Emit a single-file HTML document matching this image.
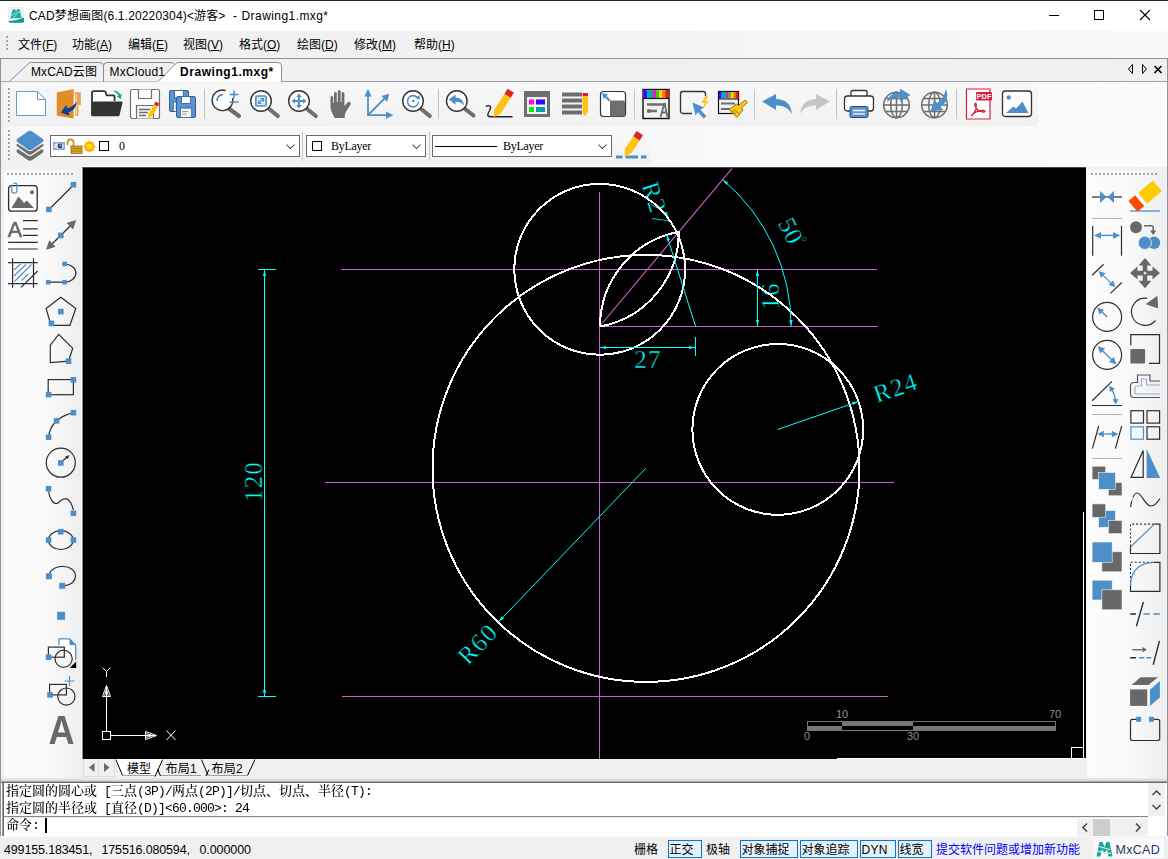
<!DOCTYPE html>
<html lang="zh-CN"><head><meta charset="utf-8"><title>CAD梦想画图 - Drawing1.mxg</title>
<style>
*{box-sizing:border-box}
html,body{margin:0;padding:0}
body{width:1168px;height:859px;position:relative;overflow:hidden;background:#f0f0f0;
 font-family:"Liberation Sans","Noto Sans CJK SC",sans-serif;font-size:12px;color:#000;line-height:14px}
.a{position:absolute}
.t{position:absolute;white-space:nowrap;line-height:14px}
u{text-decoration:underline;text-underline-offset:1px}
svg{position:absolute;overflow:visible}
.cmd{font-family:"Liberation Mono","Noto Serif CJK SC","Noto Sans CJK SC",monospace;font-size:13px;line-height:17px;white-space:pre;font-weight:500;will-change:transform}
.cmd i{font-style:normal;letter-spacing:-0.8px}
.sb{position:absolute;top:840px;height:18px;border:1px solid #0078d7;background:#e5f1fb}
</style></head>
<body>
<div class="a" style="left:0px;top:0px;width:1168px;height:1px;background:#26261e"></div>
<div class="a" style="left:0px;top:1px;width:1168px;height:30px;background:#fff"></div>
<div class="t" style="left:29px;top:9px;letter-spacing:0.15px">CAD梦想画图(6.1.20220304)&lt;游客&gt;</div>
<div class="t" style="left:233px;top:9px;">-</div>
<div class="t" style="left:241.5px;top:9px;letter-spacing:0.43px">Drawing1.mxg*</div>
<svg style="left:1040px;top:1px" width="128" height="30" viewBox="0 0 128 30"><path d="M9 14.5h10" stroke="#000" stroke-width="1" fill="none"/><rect x="54.5" y="9.5" width="9" height="9" stroke="#000" fill="none"/><path d="M100 9l10 10M110 9l-10 10" stroke="#000" stroke-width="1.1" fill="none"/></svg>
<div class="a" style="left:0px;top:31px;width:1168px;height:27px;background:linear-gradient(to right,#f0f0f0 0,#f1f1f1 40%,#f9f9f9 100%)"></div>
<div class="a" style="left:6px;top:36px;width:2px;height:15px;background:repeating-linear-gradient(to bottom,#a6a6a6 0,#a6a6a6 2px,transparent 2px,transparent 4px)"></div>
<div class="t" style="left:18px;top:38px;">文件(<u>F</u>)</div>
<div class="t" style="left:72px;top:38px;">功能(<u>A</u>)</div>
<div class="t" style="left:128px;top:38px;">编辑(<u>E</u>)</div>
<div class="t" style="left:183px;top:38px;">视图(<u>V</u>)</div>
<div class="t" style="left:239px;top:38px;">格式(<u>O</u>)</div>
<div class="t" style="left:297px;top:38px;">绘图(<u>D</u>)</div>
<div class="t" style="left:354px;top:38px;">修改(<u>M</u>)</div>
<div class="t" style="left:414px;top:38px;">帮助(<u>H</u>)</div>
<div class="a" style="left:0px;top:58px;width:1168px;height:1px;background:#8d929c"></div>
<div class="a" style="left:0px;top:58px;width:1px;height:801px;background:#8d929c"></div>
<div class="a" style="left:1167px;top:58px;width:1px;height:780px;background:#8d929c"></div>
<div class="a" style="left:1px;top:59px;width:1166px;height:22px;background:#f0f0f0"></div>
<div class="a" style="left:1px;top:81px;width:1166px;height:1px;background:#9ca2ad"></div>
<div class="a" style="left:1px;top:82px;width:1166px;height:85px;background:linear-gradient(to right,#f0f0f0 0,#f3f3f3 30%,#fafafa 65%,#fbfbfb 100%)"></div>
<div class="a" style="left:4px;top:83px;width:1034px;height:43px;background:linear-gradient(to bottom,#f8f8f8,#f1f1f1);border-radius:0 5px 5px 0"></div>
<div class="a" style="left:4px;top:127px;width:647px;height:37px;background:linear-gradient(to bottom,#f9f9f9,#f1f1f1);border-radius:4px"></div>
<div class="a" style="left:8px;top:88px;width:2px;height:34px;background:repeating-linear-gradient(to bottom,#a6a6a6 0,#a6a6a6 2px,transparent 2px,transparent 4px)"></div>
<div class="a" style="left:8px;top:130px;width:2px;height:32px;background:repeating-linear-gradient(to bottom,#a6a6a6 0,#a6a6a6 2px,transparent 2px,transparent 4px)"></div>
<svg style="left:0;top:59px" width="300" height="24" viewBox="0 0 300 24">
<path d="M9.5 22.5 L28.5 4.5 Q29.5 3.5 31.5 3.5 L100 3.5 Q103.5 3.5 103.5 7 L103.5 22.5" fill="#f0f0f0" stroke="#8c8c8c"/>
<path d="M103.5 22.5 L103.5 7 Q103.5 3.5 107 3.5 L170 3.5 Q173 3.5 174.5 5 L174.5 22.5" fill="#f0f0f0" stroke="#8c8c8c"/>
<path d="M158 22.5 L176 4.5 Q177 3.5 179 3.5 L278 3.5 Q281.5 3.5 281.5 7 L281.5 23 L158 23Z" fill="#fff" stroke="none"/>
<path d="M158 22.5 L176 4.5 Q177 3.5 179 3.5 L278 3.5 Q281.5 3.5 281.5 7 L281.5 22.5" fill="none" stroke="#8c8c8c"/>
</svg>
<div class="t" style="left:31px;top:65px;letter-spacing:0.1px">MxCAD云图</div>
<div class="t" style="left:109.5px;top:65px;letter-spacing:0.2px">MxCloud1</div>
<div class="t" style="left:180px;top:65px;font-weight:bold;letter-spacing:0.55px">Drawing1.mxg*</div>
<svg style="left:1120px;top:59px" width="46" height="22" viewBox="0 0 46 22"><path d="M12.5 5.5v9l-4-4.5z M22.5 5.5v9l4-4.5z" fill="none" stroke="#000" stroke-width="1"/><path d="M34.5 7l7 7M41.5 7l-7 7" stroke="#000" stroke-width="1.7" fill="none"/></svg>
<div class="a" style="left:302px;top:131px;width:1px;height:30px;background:#c9c9c9"></div>
<div class="a" style="left:429px;top:131px;width:1px;height:30px;background:#c9c9c9"></div>
<div class="a" style="left:50px;top:135px;width:250px;height:22px;background:#fff;border:1px solid #6b6b6b"></div><svg style="left:285px;top:143px" width="12" height="8" viewBox="0 0 12 8"><path d="M1.5 1.5l4 4l4-4" fill="none" stroke="#3c3c3c" stroke-width="1.05"/></svg>
<div class="a" style="left:306px;top:135px;width:120px;height:22px;background:#fff;border:1px solid #6b6b6b"></div><svg style="left:411px;top:143px" width="12" height="8" viewBox="0 0 12 8"><path d="M1.5 1.5l4 4l4-4" fill="none" stroke="#3c3c3c" stroke-width="1.05"/></svg>
<div class="a" style="left:432px;top:135px;width:180px;height:22px;background:#fff;border:1px solid #6b6b6b"></div><svg style="left:597px;top:143px" width="12" height="8" viewBox="0 0 12 8"><path d="M1.5 1.5l4 4l4-4" fill="none" stroke="#3c3c3c" stroke-width="1.05"/></svg>
<div class="t" style="left:119px;top:139px;font-family:'Liberation Serif','Noto Serif CJK SC',serif;font-size:12px;letter-spacing:-0.3px">0</div>
<div class="a" style="left:99px;top:141px;width:10px;height:10px;border:1px solid #000;background:#fff"></div>
<div class="a" style="left:312px;top:141px;width:10px;height:10px;border:1px solid #000;background:#fff"></div>
<div class="t" style="left:331px;top:139px;font-family:'Liberation Serif','Noto Serif CJK SC',serif;font-size:12px;letter-spacing:-0.3px">ByLayer</div>
<div class="a" style="left:435px;top:146px;width:62px;height:1px;background:#000"></div>
<div class="t" style="left:503px;top:139px;font-family:'Liberation Serif','Noto Serif CJK SC',serif;font-size:12px;letter-spacing:-0.3px">ByLayer</div>
<div class="a" style="left:1px;top:167px;width:82px;height:611px;background:#f0f0f0"></div>
<div class="a" style="left:4px;top:170px;width:78px;height:608px;background:linear-gradient(to right,#fcfcfc 0,#f9f9f9 60%,#ededed 100%);border-radius:4px 0 0 4px"></div>
<div class="a" style="left:7px;top:173px;width:68px;height:2px;background:repeating-linear-gradient(to right,#a6a6a6 0,#a6a6a6 2px,transparent 2px,transparent 4px)"></div>
<div class="a" style="left:1086px;top:167px;width:81px;height:611px;background:#f0f0f0"></div>
<div class="a" style="left:1087px;top:170px;width:78px;height:608px;background:linear-gradient(to right,#fcfcfc 0,#f9f9f9 60%,#ededed 100%);border-radius:4px"></div>
<div class="a" style="left:1091px;top:173px;width:68px;height:2px;background:repeating-linear-gradient(to right,#a6a6a6 0,#a6a6a6 2px,transparent 2px,transparent 4px)"></div>
<div class="a" style="left:81px;top:166px;width:1005px;height:1px;background:#fff"></div>
<div class="a" style="left:81px;top:166px;width:1px;height:593px;background:#fff"></div>
<div class="a" style="left:82px;top:167px;width:1004px;height:592px;background:#000;overflow:hidden;border-top:1px solid #4a4a4a;border-left:1px solid #8a8a8a">
<svg style="left:-1px;top:-1px" width="1004" height="592" viewBox="82 167 1004 592">
<text transform="translate(262 481.5) rotate(-90)" text-anchor="middle" fill="#00ffff" stroke="#000" stroke-width="0.45" font-family="Liberation Serif, serif" font-size="25" letter-spacing="1.2">120</text>
<text transform="translate(648 368) rotate(0)" text-anchor="middle" fill="#00ffff" stroke="#000" stroke-width="0.45" font-family="Liberation Serif, serif" font-size="25" letter-spacing="1.2">27</text>
<text transform="translate(779 296) rotate(-90)" text-anchor="middle" fill="#00ffff" stroke="#000" stroke-width="0.45" font-family="Liberation Serif, serif" font-size="25" letter-spacing="1.2">16</text>
<text transform="translate(641.5 185) rotate(72.5)" text-anchor="start" fill="#00ffff" stroke="#000" stroke-width="0.45" font-family="Liberation Serif, serif" font-size="25" letter-spacing="1.2">R27</text>
<text transform="translate(777.5 223) rotate(63.4)" text-anchor="start" fill="#00ffff" stroke="#000" stroke-width="0.45" font-family="Liberation Serif, serif" font-size="25" letter-spacing="0.3">50<tspan font-size="15" dx="-2.5" dy="-9">°</tspan></text>
<text transform="translate(877 403) rotate(-19)" text-anchor="start" fill="#00ffff" stroke="#000" stroke-width="0.45" font-family="Liberation Serif, serif" font-size="25" letter-spacing="1.2">R24</text>
<text transform="translate(468 666) rotate(-46)" text-anchor="start" fill="#00ffff" stroke="#000" stroke-width="0.45" font-family="Liberation Serif, serif" font-size="25" letter-spacing="1.2">R60</text>
<g stroke="#c864c8" stroke-width="1" fill="none" shape-rendering="crispEdges">
<path d="M341 269.5H877 M599.5 326.5H878 M325 482.5H894 M342 696.5H888 M599.5 192V760"/>
</g>
<path d="M599.5 326.5L731.9 168.7" stroke="#c864c8" stroke-width="1.1" fill="none"/>
<g stroke="#fff" stroke-width="2" fill="none" shape-rendering="crispEdges">
<circle cx="599.7" cy="269.3" r="85.4"/>
<circle cx="646" cy="468.4" r="213.5"/>
<circle cx="777.8" cy="429.4" r="85.4"/>
<path d="M600.1 326.5 A96.1 96.1 0 0 1 678.9 231.9 A96.1 96.1 0 0 1 600.1 326.5"/>
</g>
<g stroke="#00ffff" stroke-width="1" fill="none">
<path d="M264.5 269.5V696.5 M258 269.5H276 M258 696.5H276" shape-rendering="crispEdges"/>
<path d="M599.5 347.5H695.5 M695.5 337V356" shape-rendering="crispEdges"/>
<path d="M757.5 269.5V326.5" shape-rendering="crispEdges"/>
<path d="M791.1 326.5 A191.6 191.6 0 0 0 722.7 179.7"/>
<path d="M695.6 326.5 L666.7 234.9"/>
<path d="M777.5 429.5 L858.3 401.6"/>
<path d="M645.8 468.3 L498.8 621.6"/>
</g>
<path d="M264.5 270.0 L266.1 276.0 L262.9 276.0Z" fill="#00ffff"/>
<path d="M264.5 696.0 L262.9 690.0 L266.1 690.0Z" fill="#00ffff"/>
<path d="M600.0 347.5 L606.0 345.9 L606.0 349.1Z" fill="#00ffff"/>
<path d="M695.0 347.5 L689.0 349.1 L689.0 345.9Z" fill="#00ffff"/>
<path d="M757.5 270.0 L759.1 276.0 L755.9 276.0Z" fill="#00ffff"/>
<path d="M757.5 326.0 L755.9 320.0 L759.1 320.0Z" fill="#00ffff"/>
<path d="M791.1 326.0 L789.4 320.0 L792.6 320.0Z" fill="#00ffff"/>
<path d="M722.7 179.7 L728.3 182.4 L726.2 184.8Z" fill="#00ffff"/>
<path d="M666.7 234.9 L670.0 240.1 L666.9 241.1Z" fill="#00ffff"/>
<path d="M858.3 401.6 L853.2 405.1 L852.1 402.0Z" fill="#00ffff"/>
<path d="M498.8 621.6 L501.8 616.2 L504.1 618.4Z" fill="#00ffff"/>
<g stroke="#fff" stroke-width="1" fill="none" shape-rendering="crispEdges">
<rect x="102.5" y="731.5" width="8" height="8"/>
<path d="M106.5 731.5V686 M110.5 735.5H156"/>
</g>
<g stroke="#fff" stroke-width="1" fill="none">
<path d="M106.5 685.5L102.5 696.5H110.5Z M106.5 689L104.7 696 M106.5 689L108.3 696"/>
<path d="M156.5 735.5L145.5 731.5V739.5Z M153 735.5L146 733.7 M153 735.5L146 737.3"/>
<path d="M102.5 667.5L106.5 671.5L110.5 667.5 M106.5 671.5V677"/>
<path d="M166.5 730.5L175.5 740 M175.5 730.5L166.5 740"/>
</g>
<g shape-rendering="crispEdges"><rect x="807.5" y="721.5" width="248" height="9" fill="none" stroke="#767676"/>
<rect x="842" y="722" width="71" height="4" fill="#767676"/><rect x="808" y="726" width="34" height="4" fill="#767676"/><rect x="913" y="726" width="142" height="4" fill="#767676"/></g>
<text x="842" y="718" fill="#909090" font-family="Liberation Sans, sans-serif" font-size="11" text-anchor="middle">10</text><text x="1055" y="718" fill="#909090" font-family="Liberation Sans, sans-serif" font-size="11" text-anchor="middle">70</text><text x="807" y="740" fill="#909090" font-family="Liberation Sans, sans-serif" font-size="11" text-anchor="middle">0</text><text x="913" y="740" fill="#909090" font-family="Liberation Sans, sans-serif" font-size="11" text-anchor="middle">30</text>
<g stroke="#fff" stroke-width="1" fill="none" shape-rendering="crispEdges"><path d="M837 758.5H1086 M1083.5 512V759"/><rect x="1071.5" y="747.5" width="12" height="11"/></g>
</svg></div>
<div class="a" style="left:83px;top:759px;width:1003px;height:19px;background:#f0f0f0"></div>
<div class="a" style="left:83px;top:759px;width:16px;height:18px;background:#f0f0f0;border:1px solid #dcdcdc;border-top:none"></div>
<div class="a" style="left:99px;top:759px;width:16px;height:18px;background:#f0f0f0;border:1px solid #dcdcdc;border-top:none;border-left:none"></div>
<svg style="left:83px;top:759px" width="180" height="19" viewBox="0 0 180 19"><path d="M11.5 4v9l-5.5-4.5z M21 4v9l5.5-4.5z" fill="#6a6a6a"/><path d="M32.5 0 L39.5 16.5 L72 16.5 L79.5 0 Z" fill="#fff" stroke="none"/><path d="M32.8 0.5 L39.6 16.5 M72 17.5 L79.7 0.5 M74.5 10 L77.5 17 M118.4 0.5 L125.2 16.5 M123 17 L126 10.5 M172 0.5 L164.5 16.5" fill="none" stroke="#000" stroke-width="1"/><path d="M39.5 16.5H72 M78 16.5H118 M126 16.5H164" stroke="#a0a0a0" fill="none"/></svg>
<div class="t" style="left:127px;top:762px;">模型</div>
<div class="t" style="left:165.5px;top:762px;letter-spacing:0.3px">布局1</div>
<div class="t" style="left:211.5px;top:762px;letter-spacing:0.3px">布局2</div>
<div class="a" style="left:1px;top:778px;width:1166px;height:3px;background:linear-gradient(to bottom,#ececec,#d8d8d8)"></div>
<div class="a" style="left:1px;top:781px;width:1166px;height:1px;background:#a8a8a8"></div>
<div class="a" style="left:1px;top:782px;width:1166px;height:1px;background:#6a6a6a"></div>
<div class="a" style="left:1px;top:783px;width:1166px;height:53px;background:#fff"></div>
<div class="a" style="left:2px;top:783px;width:1px;height:53px;background:#a0a0a0"></div>
<div class="a" style="left:3px;top:783px;width:1px;height:53px;background:#696969"></div>
<div class="a" style="left:4px;top:816px;width:1144px;height:1px;background:#8a8a8a"></div>
<div class="a" style="left:4px;top:817px;width:1144px;height:1px;background:#e8e8e8"></div>
<div class="a" style="left:1148px;top:783px;width:17px;height:33px;background:#f0f0f0"></div>
<svg style="left:1148px;top:783px" width="17" height="33" viewBox="0 0 17 33"><path d="M4.5 12l4-4l4 4 M4.5 22l4 4l4-4" fill="none" stroke="#444" stroke-width="1.5"/></svg>
<div class="t cmd" style="left:6px;top:783px">指定圆的圆心或<i> [</i>三点<i>(3P)/</i>两点<i>(2P)]/</i>切点、切点、半径<i>(T):</i></div>
<div class="t cmd" style="left:6px;top:800px">指定圆的半径或<i> [</i>直径<i>(D)]&lt;60.000&gt;: 24</i></div>
<div class="t cmd" style="left:6px;top:817px">命令<i>:</i></div>
<div class="a" style="left:45px;top:818px;width:2px;height:15px;background:#000"></div>
<div class="a" style="left:1077px;top:819px;width:71px;height:17px;background:#f0f0f0"></div>
<div class="a" style="left:1093px;top:819px;width:17px;height:17px;background:#cdcdcd"></div>
<svg style="left:1077px;top:819px" width="71" height="17" viewBox="0 0 71 17"><path d="M10 4.5l-4 4l4 4 M59 4.5l4 4l-4 4" fill="none" stroke="#444" stroke-width="1.5"/></svg>
<div class="a" style="left:0px;top:836px;width:1168px;height:23px;background:#f0f0f0"></div>
<div class="a" style="left:0px;top:836px;width:1168px;height:1px;background:#fafafa"></div>
<div class="t" style="left:4px;top:843px;font-size:12.5px;letter-spacing:-0.15px">499155.183451,</div>
<div class="t" style="left:101.5px;top:843px;font-size:12.5px;letter-spacing:-0.15px">175516.080594,</div>
<div class="t" style="left:199.5px;top:843px;font-size:12.5px;letter-spacing:-0.1px">0.000000</div>
<div class="t" style="left:634px;top:843px;">栅格</div>
<div class="t" style="left:706px;top:843px;">极轴</div>
<div class="sb" style="left:668px;width:34px"></div><div class="t" style="left:669.5px;top:843px;letter-spacing:0px">正交</div>
<div class="sb" style="left:740px;width:58px"></div><div class="t" style="left:741.5px;top:843px;letter-spacing:0px">对象捕捉</div>
<div class="sb" style="left:800px;width:58px"></div><div class="t" style="left:801.5px;top:843px;letter-spacing:0px">对象追踪</div>
<div class="sb" style="left:860px;width:36px"></div><div class="t" style="left:861.5px;top:843px;letter-spacing:0.3px">DYN</div>
<div class="sb" style="left:898px;width:34px"></div><div class="t" style="left:899.5px;top:843px;letter-spacing:0px">线宽</div>
<div class="t" style="left:936px;top:843px;color:#0000ff">提交软件问题或增加新功能</div>
<div class="a" style="left:1093px;top:838px;width:71px;height:20px;background:#fafafa"></div>
<svg style="left:1096px;top:841px" width="17" height="16" viewBox="0 0 17 16"><path d="M0.5 15.5L3.5 1H6.5L8.5 6L10.5 1H13.5L16.5 15.5H12.5L11 8L8.5 13L6 8L4.5 15.5Z" fill="#1aa79a"/><path d="M3 5.5L14 8.5 M2 10.5L15 12.5" stroke="#fafafa" stroke-width="1"/></svg>
<div class="t" style="left:1115.5px;top:843px;color:#1f3864;font-size:12.5px;letter-spacing:0.3px">MxCAD</div>
<svg style="left:15px;top:88px" width="32" height="32" viewBox="0 0 32 32"><path d="M1.5 3.5H22.5L30.5 11.5V27.5H1.5Z" fill="#fff" stroke="#6b9bd0"/><path d="M22.5 3.5V11.5H30.5" fill="none" stroke="#6b9bd0"/></svg>
<svg style="left:53px;top:88px" width="32" height="32" viewBox="0 0 32 32"><path d="M3.8 4.5L20.6 1.1V30.5L3.8 27.8Z" fill="#e38c27"/><path d="M20.6 4.2H27.8V17H25.4V28H20.6Z" fill="#e9a14a"/><path d="M21.6 5V28" stroke="#fff" stroke-width="1.2"/><path d="M23.6 6V27" stroke="#f6d9b3" stroke-width="1"/><path d="M23.8 13.5C23.5 19.5 19.5 23.5 15.5 24.2L16.6 27.8L7.8 24.6L13.2 17L14.3 20.3C18 19.5 21.5 17 23.8 13.5Z" fill="#0a3f9e"/></svg>
<svg style="left:91px;top:88px" width="32" height="32" viewBox="0 0 32 32"><path d="M1 26V5Q1 3.2 2.8 3.2H13Q14.3 3.2 14.8 4.5L15.6 7.4H22Q23.6 7.4 23.6 9V13" fill="#fff" stroke="#333333" stroke-width="1.8"/><path d="M3.2 13.4H30.5Q31.8 13.4 31.5 14.8L28.6 27Q28.3 28.2 27 28.2H1.5Q0 28.2 0.1 26.5L1.6 14.8Q1.8 13.4 3.2 13.4Z" fill="#333333"/><path d="M23 3.2Q27 4 28 8L26.4 8.4L29.6 10.4L30.2 6.6L28.9 7.4Q27.6 3 23 3.2Z" fill="#1aa79a" stroke="#1aa79a" stroke-width="1"/></svg>
<svg style="left:129px;top:88px" width="32" height="32" viewBox="0 0 32 32"><rect x="1.5" y="1.5" width="29" height="29" rx="2" fill="#fff" stroke="#6e6e6e" stroke-width="1.2"/><path d="M9.5 1.5V10.5H22.5V1.5" fill="#fff" stroke="#6e6e6e" stroke-width="1.2"/><path d="M7.5 30.5V17.5H24.5V30.5" fill="#f4f4f4" stroke="#6e6e6e" stroke-width="1.2"/><path d="M10 21.5H21M10 24.5H19M10 27.5H17" stroke="#6e6e6e" stroke-width="1.4"/><path d="M19.5 30.5 L23.4 28.1 L28.7 18.6 L24.9 16.5 L19.5 26.0Z" fill="#ffc20e"/><path d="M28.7 18.6 L30.4 15.6 L26.6 13.4 L24.9 16.5Z" fill="#d8232a"/></svg>
<svg style="left:167px;top:88px" width="32" height="32" viewBox="0 0 32 32"><rect x="2.5" y="2.5" width="19" height="21" rx="1.5" fill="#5b93cf" stroke="#2f5f96" stroke-width="1"/><rect x="7.6" y="2.5" width="8.7" height="6.9" fill="#fff" stroke="#2f5f96" stroke-width="0.8"/><rect x="6.3" y="14.1" width="11.4" height="9.5" fill="#f4f4f4" stroke="#2f5f96" stroke-width="0.8"/><path d="M8.2 17.6h5.7M8.2 20.1h4.2" stroke="#888" stroke-width="0.9"/><rect x="9.5" y="8.5" width="19" height="21" rx="1.5" fill="#5b93cf" stroke="#2f5f96" stroke-width="1"/><rect x="14.6" y="8.5" width="8.7" height="6.9" fill="#fff" stroke="#2f5f96" stroke-width="0.8"/><rect x="13.3" y="20.1" width="11.4" height="9.5" fill="#f4f4f4" stroke="#2f5f96" stroke-width="0.8"/><path d="M15.2 23.6h5.7M15.2 26.1h4.2" stroke="#888" stroke-width="0.9"/></svg>
<div class="a" style="left:204px;top:89px;width:1px;height:30px;background:#c3c3c3"></div>
<svg style="left:211px;top:88px" width="32" height="32" viewBox="0 0 32 32"><path d="M18.5 21L28 28" stroke="#6e6e6e" stroke-width="4.1" stroke-linecap="round"/><path d="M21.5 10A10.3 10.3 0 1 1 14.5 2.5" fill="#fff" stroke="#333333" stroke-width="1.4"/><path d="M6 13A6 6 0 0 1 12 6.6" fill="none" stroke="#4f8fc9" stroke-width="1.8"/><path d="M18.5 6.5H27.5M23 2.5V10.5M18.5 14H27.5" stroke="#4f8fc9" stroke-width="1.6" fill="none"/></svg>
<svg style="left:249px;top:88px" width="32" height="32" viewBox="0 0 32 32"><path d="M19.5 20.5L28.8 28" stroke="#6e6e6e" stroke-width="4.1" stroke-linecap="round"/><circle cx="12" cy="13" r="10.3" fill="#fff" stroke="#333333" stroke-width="1.4"/><rect x="6.8" y="8" width="10.4" height="10" rx="1.5" fill="#d9e6f4" stroke="#4f8fc9" stroke-width="1.6"/><path d="M9.5 15.5L14.5 10.5M11.5 10.5H14.5V13.5M9.5 12.5V15.5H12.5" stroke="#4f8fc9" stroke-width="1.2" fill="none"/></svg>
<svg style="left:287px;top:88px" width="32" height="32" viewBox="0 0 32 32"><path d="M19.5 20.5L28.8 28" stroke="#6e6e6e" stroke-width="4.1" stroke-linecap="round"/><circle cx="12" cy="13" r="10.3" fill="#fff" stroke="#333333" stroke-width="1.4"/><path d="M12 5.5L14.8 9H13V12H16V10.2L19.5 13L16 15.8V14H13V17H14.8L12 20.5L9.2 17H11V14H8V15.8L4.5 13L8 10.2V12H11V9H9.2Z" fill="#4f8fc9"/></svg>
<svg style="left:325px;top:88px" width="32" height="32" viewBox="0 0 32 32"><path d="M9.5 30C8 26 5.5 22 5.5 19V9.5Q5.5 8 6.8 8T8.2 9.5V15H9V5.5Q9 4 10.4 4T11.8 5.5V14H12.8V3.5Q12.8 2 14.2 2T15.6 3.5V14H16.6V5.5Q16.6 4 18 4T19.4 5.5V18L22.5 14.5Q23.8 13.2 25 14T25.6 16.5C23.5 20 21 23 20 26L19.6 30Z" fill="#6e6e6e"/></svg>
<svg style="left:363px;top:88px" width="32" height="32" viewBox="0 0 32 32"><path d="M5 7V27.2H26" stroke="#4f8fc9" stroke-width="1.8" fill="none"/><path d="M5 27.2L22 10" stroke="#4f8fc9" stroke-width="1.8"/><path d="M5 0.8L8.6 8.5H1.4Z M30.5 27.2L23 30.8V23.6Z M26.3 5.8L24.2 13.8L18.4 8Z" fill="#4f8fc9"/></svg>
<svg style="left:401px;top:88px" width="32" height="32" viewBox="0 0 32 32"><path d="M19.5 20.5L28.8 28" stroke="#6e6e6e" stroke-width="4.1" stroke-linecap="round"/><circle cx="12" cy="13" r="10.3" fill="#fff" stroke="#333333" stroke-width="1.4"/><path d="M16.2 9.5A5.6 5.6 0 1 0 17.6 14" fill="none" stroke="#4f8fc9" stroke-width="1.6"/><path d="M18.8 7L18.6 11.8L14.4 10Z" fill="#4f8fc9"/><circle cx="12.2" cy="13" r="1.3" fill="#4f8fc9"/></svg>
<div class="a" style="left:438px;top:89px;width:1px;height:30px;background:#c3c3c3"></div>
<svg style="left:444px;top:88px" width="32" height="32" viewBox="0 0 32 32"><path d="M20.5 20.5L29.5 27.5" stroke="#6e6e6e" stroke-width="4.1" stroke-linecap="round"/><circle cx="12.8" cy="13" r="10.3" fill="#fff" stroke="#333333" stroke-width="1.4"/><path d="M4.8 11.5L11.5 6.5V9.6C16 9.6 19.5 12.5 20.2 17.5C18 14.8 15 13.8 11.5 13.8V16.8Z" fill="#4f8fc9"/></svg>
<svg style="left:482px;top:88px" width="32" height="32" viewBox="0 0 32 32"><path d="M3.8 18.5C8 16.5 10 18.5 7.5 22.5C4.5 27.5 5.5 29 10 28.8H30.5" fill="none" stroke="#222" stroke-width="1.4"/><path d="M11.8 29.3 L18.5 25.7 L28.7 9.8 L22.5 5.8 L12.3 21.7Z" fill="#ffc20e"/><path d="M28.7 9.8 L31.9 4.8 L25.7 0.8 L22.5 5.8Z" fill="#d8232a"/></svg>
<svg style="left:520px;top:88px" width="32" height="32" viewBox="0 0 32 32"><rect x="4" y="3" width="26" height="26" fill="#6e6e6e"/><rect x="7" y="9" width="20" height="17" fill="#f0f0f0"/><rect x="9" y="11.5" width="5" height="5" fill="#ff00ff"/><rect x="16" y="11.5" width="9" height="5" fill="#4000ff"/><rect x="9" y="19" width="5" height="5" fill="#00f000"/><rect x="16" y="19" width="9" height="5" fill="#00a0a0"/></svg>
<svg style="left:558px;top:88px" width="32" height="32" viewBox="0 0 32 32"><path d="M4 6.5H24M4 12.5H24M4 18.5H24M4 24.5H24" stroke="#6e6e6e" stroke-width="4"/><path d="M24.5 8H30V24L27.2 28.5L24.5 24Z" fill="#ffc20e"/><rect x="24.5" y="5" width="5.5" height="3" fill="#d8232a"/></svg>
<svg style="left:596px;top:88px" width="32" height="32" viewBox="0 0 32 32"><rect x="4.5" y="3.5" width="25" height="25" rx="3" fill="#fff" stroke="#333333" stroke-width="1.2"/><path d="M14 12.5H27Q29 12.5 29 14.5V26Q29 28.5 26.5 28.5H14Z" fill="#6e6e6e"/><path d="M6 5L12 6.5L10.5 8L14.5 12L13 13.5L9 9.5L7.5 11Z" fill="#4f8fc9"/></svg>
<div class="a" style="left:634px;top:89px;width:1px;height:30px;background:#c3c3c3"></div>
<svg style="left:640px;top:88px" width="32" height="32" viewBox="0 0 32 32"><rect x="3" y="1.5" width="26" height="29" fill="#f2f2f2" stroke="#111" stroke-width="1.4"/><rect x="3.70" y="2.2" width="3.38" height="8" fill="#4000ff"/><rect x="6.78" y="2.2" width="3.38" height="8" fill="#00a0ff"/><rect x="9.85" y="2.2" width="3.38" height="8" fill="#00c060"/><rect x="12.93" y="2.2" width="3.38" height="8" fill="#ff00ff"/><rect x="16.00" y="2.2" width="3.38" height="8" fill="#40d000"/><rect x="19.07" y="2.2" width="3.38" height="8" fill="#ffd000"/><rect x="22.15" y="2.2" width="3.38" height="8" fill="#ff8000"/><rect x="25.23" y="2.2" width="3.38" height="8" fill="#e02020"/><path d="M3 10.5H29" stroke="#111" stroke-width="1.2"/><path d="M7 16.5H26M7 23H17" stroke="#6e6e6e" stroke-width="2.4"/><path d="M20.5 29L24.5 15L27.5 29M22 24.5H26.5" stroke="#6e6e6e" stroke-width="1.8" fill="none"/><circle cx="9" cy="23" r="2" fill="#6e6e6e"/></svg>
<svg style="left:678px;top:88px" width="32" height="32" viewBox="0 0 32 32"><path d="M14 25.5H5Q2.5 25.5 2.5 23V6Q2.5 3.5 5 3.5H25Q27.5 3.5 27.5 6V8" fill="none" stroke="#333333" stroke-width="1.3"/><path d="M14.5 14.5L26 19.5L22.5 22L28.5 28L25.5 30.5L20 24L17.5 27.5Z" fill="#4f8fc9"/><path d="M27.5 8L23.5 15H26.5L24.5 21L31 13H27.5L30 8Z" fill="#ffc61a"/></svg>
<svg style="left:716px;top:88px" width="32" height="32" viewBox="0 0 32 32"><rect x="2.5" y="3.5" width="20" height="22" fill="#f2f2f2" stroke="#111" stroke-width="1.2"/><rect x="3.00" y="4" width="2.67" height="6.5" fill="#4000ff"/><rect x="5.38" y="4" width="2.67" height="6.5" fill="#00a0ff"/><rect x="7.75" y="4" width="2.67" height="6.5" fill="#00c060"/><rect x="10.12" y="4" width="2.67" height="6.5" fill="#ff00ff"/><rect x="12.50" y="4" width="2.67" height="6.5" fill="#40d000"/><rect x="14.88" y="4" width="2.67" height="6.5" fill="#ffd000"/><rect x="17.25" y="4" width="2.67" height="6.5" fill="#ff8000"/><rect x="19.62" y="4" width="2.67" height="6.5" fill="#e02020"/><path d="M2.5 11H22.5" stroke="#111"/><path d="M5 15.5H19M5 21H14" stroke="#6e6e6e" stroke-width="1.8"/><path d="M29 12L31.5 14.5L25.5 20L27 22L21 29.5L13 21.5L20.5 16L22.5 17.5Z" fill="#ffc61a" stroke="#7a5c00" stroke-width="0.8"/><path d="M16 23L20 26M18 21.5L22.5 25.5" stroke="#7a5c00" stroke-width="0.8"/></svg>
<div class="a" style="left:754px;top:89px;width:1px;height:30px;background:#c3c3c3"></div>
<svg style="left:761px;top:88px" width="32" height="32" viewBox="0 0 32 32"><path d="M1 13.5L15 6V11C24 11 30 16 31 26C28 20 22.5 17.5 15 17.5V22Z" fill="#4f8fc9"/></svg>
<svg style="left:799px;top:88px" width="32" height="32" viewBox="0 0 32 32"><path d="M31 13.5L17 6V11C8 11 2 16 1 26C4 20 9.5 17.5 17 17.5V22Z" fill="#c6c6c6"/></svg>
<div class="a" style="left:836px;top:89px;width:1px;height:30px;background:#c3c3c3"></div>
<svg style="left:843px;top:88px" width="32" height="32" viewBox="0 0 32 32"><path d="M8 8V4Q8 2.5 9.5 2.5H22.5Q24 2.5 24 4V8" fill="#fff" stroke="#333333" stroke-width="1.3"/><rect x="1.5" y="8" width="29" height="15" rx="3" fill="#fff" stroke="#333333" stroke-width="1.3"/><rect x="7" y="18.5" width="18" height="11" rx="1.5" fill="#5b93cf" stroke="#2a4a70" stroke-width="1"/><path d="M10 22.5H22M10 25.8H22" stroke="#fff" stroke-width="1.3"/></svg>
<svg style="left:881px;top:88px" width="32" height="32" viewBox="0 0 32 32"><g fill="none" stroke="#6e6e6e" stroke-width="1.5"><circle cx="15.5" cy="17" r="12.8"/><ellipse cx="15.5" cy="17" rx="5.8" ry="12.8"/><path d="M15.5 4.199999999999999V29.8M2.6999999999999993 17H28.3M4.4 10.6H26.6M4.4 23.4H26.6"/></g><path d="M19 0.5L29.5 7L19 13.5V9.5C13 9.5 9 11 6 14.5C7 8.5 12 4.5 19 4.5Z" fill="#4f8fc9"/></svg>
<svg style="left:919px;top:88px" width="32" height="32" viewBox="0 0 32 32"><g fill="none" stroke="#6e6e6e" stroke-width="1.5"><circle cx="15.5" cy="17" r="12.8"/><ellipse cx="15.5" cy="17" rx="5.8" ry="12.8"/><path d="M15.5 4.199999999999999V29.8M2.6999999999999993 17H28.3M4.4 10.6H26.6M4.4 23.4H26.6"/></g><path d="M27 1C30 9 27 15.5 21.5 18.5L24 22L11.5 23L15.5 11.5L18 15C22.5 12.5 25.5 8 27 1Z" fill="#4f8fc9"/></svg>
<div class="a" style="left:956px;top:89px;width:1px;height:30px;background:#c3c3c3"></div>
<svg style="left:963px;top:88px" width="32" height="32" viewBox="0 0 32 32"><path d="M3.5 1H21L27 1V31H3.5Z" fill="#fff" stroke="#d81e3f" stroke-width="1.2"/><rect x="13" y="4" width="16" height="8.5" rx="1" fill="#d81e3f"/><text x="21" y="11" text-anchor="middle" font-family="Liberation Sans, sans-serif" font-weight="bold" font-size="7.5" fill="#fff">PDF</text><path d="M9.5 26.5C12 24 13.5 19.5 13.2 16.5C12.9 14.5 11.5 15 11.8 17C12.3 20.5 16 24 20.5 24C22.5 24 22.5 22.3 20.5 22.3C17 22.3 12 24 9.5 26.5C8 28 9 28.5 9.5 26.5Z" fill="none" stroke="#d81e3f" stroke-width="1.3"/></svg>
<svg style="left:1001px;top:88px" width="32" height="32" viewBox="0 0 32 32"><rect x="1.5" y="3" width="29" height="25.5" rx="3" fill="#fff" stroke="#333333" stroke-width="1.3"/><circle cx="7.8" cy="9.5" r="2.2" fill="#4f8fc9"/><path d="M5 25L12.5 18.5L15 20.5L21.5 13.5L27.5 25Z" fill="#4f8fc9"/></svg>
<svg style="left:14px;top:130px" width="32" height="32" viewBox="0 0 32 32"><path d="M16 11.399999999999999Q17.2 11.399999999999999 18.2 12.299999999999999L29.0 19.8Q30.2 21.2 29.0 22.4L18.2 30.1Q16 31.6 13.8 30.1L3.000000000000001 22.4Q1.8000000000000007 21.2 3.000000000000001 19.8L13.8 12.299999999999999Q14.8 11.399999999999999 16 11.399999999999999Z" fill="#6e6e6e"/><path d="M16 6.699999999999999Q17.2 6.699999999999999 18.2 7.6L30.0 15.1Q31.2 16.5 30.0 17.7L18.2 25.400000000000002Q16 26.900000000000002 13.8 25.400000000000002L2.000000000000001 17.7Q0.8000000000000007 16.5 2.000000000000001 15.1L13.8 7.6Q14.8 6.699999999999999 16 6.699999999999999Z" fill="#f6f6f6"/><path d="M16 5.299999999999999Q17.2 5.299999999999999 18.2 6.199999999999999L29.0 13.7Q30.2 15.1 29.0 16.3L18.2 24.0Q16 25.5 13.8 24.0L3.000000000000001 16.3Q1.8000000000000007 15.1 3.000000000000001 13.7L13.8 6.199999999999999Q14.8 5.299999999999999 16 5.299999999999999Z" fill="#6e6e6e"/><path d="M16 1.8999999999999986Q17.2 1.8999999999999986 18.2 2.7999999999999985L30.0 10.299999999999999Q31.2 11.7 30.0 12.899999999999999L18.2 20.6Q16 22.1 13.8 20.6L2.000000000000001 12.899999999999999Q0.8000000000000007 11.7 2.000000000000001 10.299999999999999L13.8 2.7999999999999985Q14.8 1.8999999999999986 16 1.8999999999999986Z" fill="#f6f6f6"/><path d="M16 0.6999999999999993Q17.2 0.6999999999999993 18.2 1.5999999999999992L29.0 9.1Q30.2 10.5 29.0 11.7L18.2 19.400000000000002Q16 20.900000000000002 13.8 19.400000000000002L3.000000000000001 11.7Q1.8000000000000007 10.5 3.000000000000001 9.1L13.8 1.5999999999999992Q14.8 0.6999999999999993 16 0.6999999999999993Z" fill="#4f8fc9"/></svg>
<svg style="left:616px;top:129px" width="32" height="32" viewBox="0 0 32 32"><path d="M0 28H6.5M9.5 28H22M25 28H30.5" stroke="#4f8fc9" stroke-width="3"/><path d="M8.6 27.6 L15.5 23.9 L23.7 11.4 L17.3 7.2 L9.1 19.8Z" fill="#ffc20e"/><path d="M23.7 11.4 L27.0 6.3 L20.6 2.1 L17.3 7.2Z" fill="#d8232a"/></svg>
<svg style="left:52px;top:138px" width="46" height="16" viewBox="0 0 46 16"><rect x="1" y="4" width="12" height="8" fill="#8fa9c6"/><ellipse cx="7" cy="8" rx="5" ry="2.8" fill="#dfe8f1"/><circle cx="8" cy="8" r="2.4" fill="#28456e"/><circle cx="8.5" cy="7.5" r="0.8" fill="#fff"/><path d="M15.5 7V4.5Q15.5 1.5 18.5 1.5T21.5 4.5V8" fill="none" stroke="#c49a1c" stroke-width="1.8"/><rect x="19" y="8" width="11" height="7.5" fill="#d9ab25" stroke="#8c6a0a" stroke-width="0.8"/><path d="M19.5 10.5H29.5M19.5 13H29.5" stroke="#8c6a0a" stroke-width="0.7"/><circle cx="37.5" cy="8.5" r="5.2" fill="#ffa800"/><circle cx="37.5" cy="8.5" r="3" fill="#ffe000"/><g fill="#ffd000"><rect x="37" y="1.5" width="1" height="1"/><rect x="37" y="14.5" width="1" height="1"/><rect x="30.8" y="8" width="1" height="1"/><rect x="43.2" y="8" width="1" height="1"/><rect x="32.5" y="3.5" width="1" height="1"/><rect x="41.5" y="3.5" width="1" height="1"/><rect x="32.5" y="12.5" width="1" height="1"/><rect x="41.5" y="12.5" width="1" height="1"/></g></svg>
<svg style="left:8px;top:7px" width="16" height="16" viewBox="0 0 16 16"><rect x="0" y="0" width="16" height="16" rx="1.8" fill="#f1f1f1"/><path d="M2.3 11.3L4.4 3.2Q4.7 2.2 5.7 2.2H6.4Q7.3 2.2 7.6 3.2L8.1 5L8.6 3.2Q8.9 2.2 9.8 2.2H10.6Q11.6 2.2 11.9 3.2L13.7 11.3Z" fill="#1fb0a4"/><path d="M2.5 8.6L8 6.2L13 4.6M5.2 11L9 7.5" stroke="#e4f3f1" stroke-width="0.7" fill="none"/><path d="M0.6 14C6 14 11 13 16 10.6V14.2Q16 15.8 14.2 15.8H2.2Q0.7 15.7 0.6 14Z" fill="#12978e"/></svg>
<svg style="left:0;top:0" width="1168" height="859" viewBox="0 0 1168 859">
<rect x="8.6" y="185.6" width="28.6" height="25.6" rx="3" fill="none" stroke="#2e2e2e" stroke-width="1.3"/><path d="M11.5 208L18.5 196.5L24 203L26.8 200.5L34 208Z" fill="#686868"/><circle cx="32" cy="192.2" r="2" fill="#686868"/><path d="M11.8 184.5V191Q11.8 193.2 14.3 193.2T16.8 191V185Q16.8 183.2 15 183.2H13.5" fill="none" stroke="#4f8fc9" stroke-width="1.2"/>
<path d="M49 209.5L73.5 185" stroke="#2e2e2e" stroke-width="1.2" fill="none"/><rect x="70.6" y="181.9" width="5.6" height="5.6" fill="#4f8fc9"/><rect x="46.1" y="206.6" width="5.6" height="5.6" fill="#4f8fc9"/>
<text x="15" y="236.6" text-anchor="middle" font-family="Liberation Sans, sans-serif" font-size="21.5" fill="#686868" stroke="#686868" stroke-width="0.6">A</text><path d="M23 220.7H37.7M23 228.8H37.7M23 235.4H37.7M8 242.4H37.7M8 249H37.7" stroke="#2e2e2e" stroke-width="1.2" fill="none"/>
<path d="M50 246L72.5 223.8" stroke="#2e2e2e" stroke-width="1.2" fill="none"/><path d="M46.1 249.8L49.2 240.2L55.7 246.7Z" fill="#686868"/><path d="M76.2 220.0L73.1 229.6L66.6 223.1Z" fill="#686868"/><rect x="58.0" y="232.6" width="5.6" height="5.6" fill="#4f8fc9"/>
<path d="M12.6 258.2V287.8M33.5 258.2V287.8M8 262.7H37.7M8 283.6H37.7M21 287.4L37.7 271" stroke="#2e2e2e" stroke-width="1.2" fill="none"/><path d="M14 270L20.5 264M14 276L26 264.5M14.5 281.5L31.5 264.5M21.5 280.5L28.5 274" stroke="#4f8fc9" stroke-width="1.1" fill="none"/>
<path d="M48.2 282.2H64.6A11.3 9.1 0 0 0 64.6 264" stroke="#2e2e2e" stroke-width="1.2" fill="none"/><rect x="62.3" y="261.7" width="4.6" height="4.6" fill="#4f8fc9"/><rect x="45.9" y="279.9" width="4.6" height="4.6" fill="#4f8fc9"/><rect x="62.3" y="279.9" width="4.6" height="4.6" fill="#4f8fc9"/>
<path d="M60.8 297.3L75.8 308.5L69.9 325.3H51L46.1 308.5Z" stroke="#2e2e2e" stroke-width="1.2" fill="none"/><rect x="58.0" y="308.8" width="5.6" height="5.6" fill="#4f8fc9"/><rect x="48.6" y="320.6" width="5.6" height="5.6" fill="#4f8fc9"/>
<path d="M58.7 334.3L72.7 348.3L68.5 361.2L50.3 362.6V345.1Z" stroke="#2e2e2e" stroke-width="1.2" fill="none"/><rect x="65.7" y="358.4" width="5.6" height="5.6" fill="#4f8fc9"/>
<rect x="48.2" y="379.6" width="25.2" height="15.1" stroke="#2e2e2e" stroke-width="1.2" fill="none"/><rect x="70.6" y="377.0" width="5.6" height="5.6" fill="#4f8fc9"/><rect x="45.8" y="391.8" width="5.6" height="5.6" fill="#4f8fc9"/>
<path d="M48.6 437.3Q50.5 418.5 73.4 412.7" stroke="#2e2e2e" stroke-width="1.2" fill="none"/><rect x="70.6" y="409.9" width="5.6" height="5.6" fill="#4f8fc9"/><rect x="53.8" y="418.0" width="5.6" height="5.6" fill="#4f8fc9"/><rect x="45.8" y="434.5" width="5.6" height="5.6" fill="#4f8fc9"/>
<circle cx="60.8" cy="462.7" r="14.5" stroke="#2e2e2e" stroke-width="1.2" fill="none"/><path d="M60.8 462.7L67 457" stroke="#2e2e2e" stroke-width="1.2" fill="none"/><path d="M69.4 455.2L67.6 459.2L65.2 456.5Z" fill="#2e2e2e"/><rect x="58.0" y="460.1" width="5.6" height="5.6" fill="#4f8fc9"/>
<path d="M48.6 491.5C50 500 54.5 506 58.5 502.5C63 498 69.5 495 73.4 510" stroke="#2e2e2e" stroke-width="1.2" fill="none"/><rect x="45.8" y="486.0" width="5.6" height="5.6" fill="#4f8fc9"/><rect x="70.6" y="510.5" width="5.6" height="5.6" fill="#4f8fc9"/>
<ellipse cx="60.8" cy="540.1" rx="12.4" ry="9.4" stroke="#2e2e2e" stroke-width="1.2" fill="none"/><rect x="58.0" y="528.9" width="5.6" height="5.6" fill="#4f8fc9"/><rect x="45.8" y="537.3" width="5.6" height="5.6" fill="#4f8fc9"/><rect x="70.6" y="537.3" width="5.6" height="5.6" fill="#4f8fc9"/>
<path d="M49.5 573.5C53 563.5 75.5 564 75.5 576C75.5 581 71.5 584.5 64.5 585.8" stroke="#2e2e2e" stroke-width="1.2" fill="none"/><rect x="45.9" y="573.3" width="6" height="6" fill="#4f8fc9"/><rect x="59.2" y="582.8" width="6" height="6" fill="#4f8fc9"/>
<rect x="57.1" y="611.8" width="8" height="8" fill="#4f8fc9"/>
<path d="M59 645V638.8H69.5L75.7 645V660" fill="#fff" stroke="#4f8fc9" stroke-width="1.3"/><path d="M69.5 638.8V645H75.7Z" fill="#4f8fc9"/><rect x="48.4" y="647.1" width="15.9" height="10.1" stroke="#2e2e2e" stroke-width="1.2" fill="none"/><circle cx="63.6" cy="658.8" r="8.6" stroke="#2e2e2e" stroke-width="1.2" fill="none"/><rect x="45.8" y="654.4" width="5.6" height="5.6" fill="#4f8fc9"/><path d="M76.2 661.4V668H69.6Z" fill="#000"/>
<rect x="49.6" y="684.4" width="16.8" height="10.5" stroke="#2e2e2e" stroke-width="1.2" fill="none"/><circle cx="66.4" cy="696.6" r="8.6" stroke="#2e2e2e" stroke-width="1.2" fill="none"/><rect x="47.2" y="692.1" width="5.6" height="5.6" fill="#4f8fc9"/><path d="M64.5 681H74.5M69.5 676V686" stroke="#4f8fc9" stroke-width="1.2"/>
<text x="61.5" y="743.6" text-anchor="middle" font-family="Liberation Sans, sans-serif" font-weight="bold" font-size="40.5" textLength="26" lengthAdjust="spacingAndGlyphs" fill="#686868">A</text>
<path d="M1092 218.5H1122M1092 414.5H1122M1092 458.5H1122" stroke="#b4b4b4" stroke-width="1" fill="none" shape-rendering="crispEdges"/>
<path d="M1092 197H1122" stroke="#2e2e2e" stroke-width="1.2" fill="none"/><path d="M1100 191L1106.5 197L1100 203Z M1114 191L1107.5 197L1114 203Z" fill="#4f8fc9"/>
<path d="M1092.7 226V255.7M1121.5 226V255.7" stroke="#2e2e2e" stroke-width="1.2" fill="none"/><path d="M1099.6 235.4L1114.6 235.4" stroke="#4f8fc9" stroke-width="1.4"/><path d="M1094.0 235.4L1101.0 232.0L1101.0 238.8Z" fill="#4f8fc9"/><path d="M1120.2 235.4L1113.2 238.8L1113.2 232.0Z" fill="#4f8fc9"/>
<path d="M1092.1 275.2L1103.6 264.3M1110.5 293.4L1121.7 282.5" stroke="#2e2e2e" stroke-width="1.2" fill="none"/><path d="M1102.3 274.6L1111.7 283.6" stroke="#4f8fc9" stroke-width="1.3"/><path d="M1098.5 271.0L1105.4 273.2L1101.0 277.8Z" fill="#4f8fc9"/><path d="M1115.5 287.2L1108.6 285.0L1113.0 280.4Z" fill="#4f8fc9"/>
<circle cx="1107.1" cy="316.9" r="14.5" stroke="#2e2e2e" stroke-width="1.2" fill="none"/><path d="M1107.1 317L1101 311" stroke="#4f8fc9" stroke-width="1.4"/><path d="M1097.2 307.5L1104.1 309.8L1099.5 314.4Z" fill="#4f8fc9"/>
<circle cx="1107.1" cy="354.9" r="14.5" stroke="#2e2e2e" stroke-width="1.2" fill="none"/><path d="M1101.7 350.1L1112.4 360.5" stroke="#4f8fc9" stroke-width="1.4"/><path d="M1097.7 346.2L1105.1 348.6L1100.3 353.5Z" fill="#4f8fc9"/><path d="M1116.4 364.4L1109.0 362.0L1113.8 357.1Z" fill="#4f8fc9"/>
<path d="M1092 405.5H1122M1092.1 400.7L1112 381.4" stroke="#2e2e2e" stroke-width="1.2" fill="none"/><path d="M1111 388.5Q1115 394 1115.5 401.5" stroke="#4f8fc9" stroke-width="1.3" fill="none"/><path d="M1109.3 385.8L1114.9 388.6L1109.9 392.0Z" fill="#4f8fc9"/><path d="M1115.8 404.6L1112.5 399.3L1118.5 399.0Z" fill="#4f8fc9"/>
<path d="M1092.4 448.7L1098.7 426M1115.4 448.7L1121.7 426" stroke="#2e2e2e" stroke-width="1.2" fill="none"/><path d="M1102.5 434.0L1113.1 434.0" stroke="#4f8fc9" stroke-width="1.3"/><path d="M1097.3 434.0L1103.8 430.8L1103.8 437.2Z" fill="#4f8fc9"/><path d="M1118.3 434.0L1111.8 437.2L1111.8 430.8Z" fill="#4f8fc9"/>
<rect x="1092.1" y="466.2" width="13.6" height="13.3" fill="#686868" stroke="#f4f4f4" stroke-width="0.6"/><rect x="1108.5" y="482.5" width="13.5" height="13.3" fill="#686868" stroke="#f4f4f4" stroke-width="0.6"/><rect x="1098.7" y="472.5" width="16.7" height="16.8" fill="#4f8fc9" stroke="#f4f4f4" stroke-width="0.6"/>
<rect x="1098.7" y="510.6" width="16.7" height="16.7" fill="#4f8fc9" stroke="#f4f4f4" stroke-width="0.6"/><rect x="1092.1" y="503.9" width="13.6" height="13.4" fill="#686868" stroke="#f4f4f4" stroke-width="0.6"/><rect x="1108.5" y="520.4" width="13.5" height="13.2" fill="#686868" stroke="#f4f4f4" stroke-width="0.6"/>
<rect x="1101.9" y="551.8" width="20.1" height="20.0" fill="#686868" stroke="#f4f4f4" stroke-width="0.6"/><rect x="1092.1" y="542" width="20.1" height="20.3" fill="#4f8fc9" stroke="#f4f4f4" stroke-width="0.6"/>
<rect x="1092.1" y="580.2" width="20.1" height="19.8" fill="#4f8fc9" stroke="#f4f4f4" stroke-width="0.6"/><rect x="1101.9" y="589.8" width="20.1" height="20.0" fill="#686868" stroke="#f4f4f4" stroke-width="0.6"/>
<g transform="translate(1145.2 196.2) rotate(-40)"><rect x="-16" y="-7" width="9" height="14" fill="#ff4a00"/><rect x="-7" y="-7" width="3.5" height="14" fill="#fff"/><rect x="-3.5" y="-7" width="19.5" height="14" fill="#ffcb05"/></g><path d="M1130 211H1160" stroke="#4f8fc9" stroke-width="1.3"/>
<circle cx="1136" cy="227.3" r="6" fill="#686868"/><path d="M1144 225.7H1151.5Q1153.2 225.7 1153.2 227.4V231" stroke="#686868" stroke-width="1.6" fill="none"/><path d="M1153.2 235.0L1150.0 230.5L1156.4 230.5Z" fill="#686868"/><circle cx="1154" cy="242.8" r="6.2" fill="#4f8fc9"/><circle cx="1144.8" cy="242.8" r="6.6" fill="#4f8fc9" stroke="#f4f4f4" stroke-width="0.8"/>
<path d="M1145 258L1151.5 265.5H1147.3V270.8H1152.5V266.6L1160 273.1L1152.5 279.6V275.4H1147.3V280.7H1151.5L1145 288.2L1138.5 280.7H1142.7V275.4H1137.5V279.6L1130 273.1L1137.5 266.6V270.8H1142.7V265.5H1138.5Z" fill="#686868"/><circle cx="1145" cy="273.1" r="1.6" fill="#f4f4f4" stroke="#686868" stroke-width="0.6"/>
<path d="M1147 298.3A13.6 13.6 0 1 0 1155.5 320.5" stroke="#2e2e2e" stroke-width="1.2" fill="none"/><path d="M1146.5 304L1157 296.5L1157.6 307.8Z" fill="#686868" stroke="#686868" stroke-width="1" stroke-linejoin="round"/>
<path d="M1130.8 345.5V334.6H1159.5V363.3H1149" stroke="#2e2e2e" stroke-width="1.2" fill="none"/><rect x="1130.4" y="349" width="14.7" height="14.6" rx="1" fill="#686868"/>
<path d="M1160 397.5H1134Q1130.5 397.5 1130.5 394V386Q1130.5 382.5 1134 382.5H1137.5V375H1150V381H1160" fill="none" stroke="#555" stroke-width="1.2"/><path d="M1160 394H1137Q1135 394 1135 392V388Q1135 386 1137 386H1141.5V379H1146.5V385H1160" fill="none" stroke="#8fb0d0" stroke-width="1.1"/>
<rect x="1130.9" y="410.7" width="12.6" height="12.4" stroke="#2e2e2e" stroke-width="1.2" fill="none"/><rect x="1147" y="410.7" width="12.6" height="12.4" stroke="#2e2e2e" stroke-width="1.2" fill="none"/><rect x="1147" y="426.8" width="12.6" height="12.4" stroke="#2e2e2e" stroke-width="1.2" fill="none"/><rect x="1130.9" y="426.8" width="12.6" height="12.4" fill="none" stroke="#4f8fc9" stroke-width="1.2"/>
<path d="M1131 477.4H1143.2V450.5Z" stroke="#2e2e2e" stroke-width="1.2" fill="none"/><path d="M1146.6 448.7V477.9H1160.2Z" fill="#4f8fc9"/>
<path d="M1130.5 507C1132 498 1134 493 1137 493C1142 493 1145 506 1151 506C1155 506 1157.5 502.5 1160 498.5" stroke="#2e2e2e" stroke-width="1.2" fill="none"/><path d="M1131.2 501L1132.2 497" stroke="#f4f4f4" stroke-width="2"/>
<path d="M1130.5 546.5V553.5H1159.9V524.1H1154" stroke="#2e2e2e" stroke-width="1.2" fill="none"/><path d="M1130.5 546.5V524.1H1154" stroke="#2e2e2e" stroke-width="1.1" stroke-dasharray="2 2" fill="none"/><path d="M1130.5 547L1154.3 524.1" stroke="#4f8fc9" stroke-width="1.3"/>
<path d="M1130.5 586V591.4H1159.9V562.3H1154" stroke="#2e2e2e" stroke-width="1.2" fill="none"/><path d="M1130.5 586V562.3H1154" stroke="#2e2e2e" stroke-width="1.1" stroke-dasharray="2 2" fill="none"/><path d="M1130.5 586Q1131 563 1154.3 562.3" stroke="#4f8fc9" stroke-width="1.3" fill="none"/>
<path d="M1130.1 614H1136M1136.4 626.2L1143.4 602" stroke="#2e2e2e" stroke-width="1.4" fill="none"/><path d="M1143.4 614H1149.7M1153.5 614H1159.9" stroke="#4f8fc9" stroke-width="1.4"/>
<path d="M1132.2 649.7H1143" stroke="#686868" stroke-width="1.4"/><path d="M1147.0 649.7L1142.5 652.3L1142.5 647.1Z" fill="#686868"/><path d="M1130.1 657.7H1136M1153.2 664.7L1159.5 640.9" stroke="#2e2e2e" stroke-width="1.4" fill="none"/><path d="M1139.2 657.7H1144.2M1146.2 657.7H1151.2" stroke="#4f8fc9" stroke-width="1.4"/>
<path d="M1131.5 685L1140.6 677.3H1158.1L1148.3 685Z" fill="#686868"/><rect x="1130.1" y="689.4" width="17.1" height="16.5" fill="#686868"/><path d="M1150 689.8L1159.9 681V697.5L1150 706Z" fill="#4f8fc9"/>
<path d="M1137 719.3H1132.5Q1130.5 719.3 1130.5 721.3V738.5Q1130.5 740.5 1132.5 740.5H1157.7Q1159.7 740.5 1159.7 738.5V721.3Q1159.7 719.3 1157.7 719.3H1153.5" stroke="#2e2e2e" stroke-width="1.2" fill="none"/><rect x="1136.2" y="716.8" width="5" height="5" fill="#4f8fc9"/><rect x="1149.0" y="716.8" width="5" height="5" fill="#4f8fc9"/>
</svg>
</body></html>
